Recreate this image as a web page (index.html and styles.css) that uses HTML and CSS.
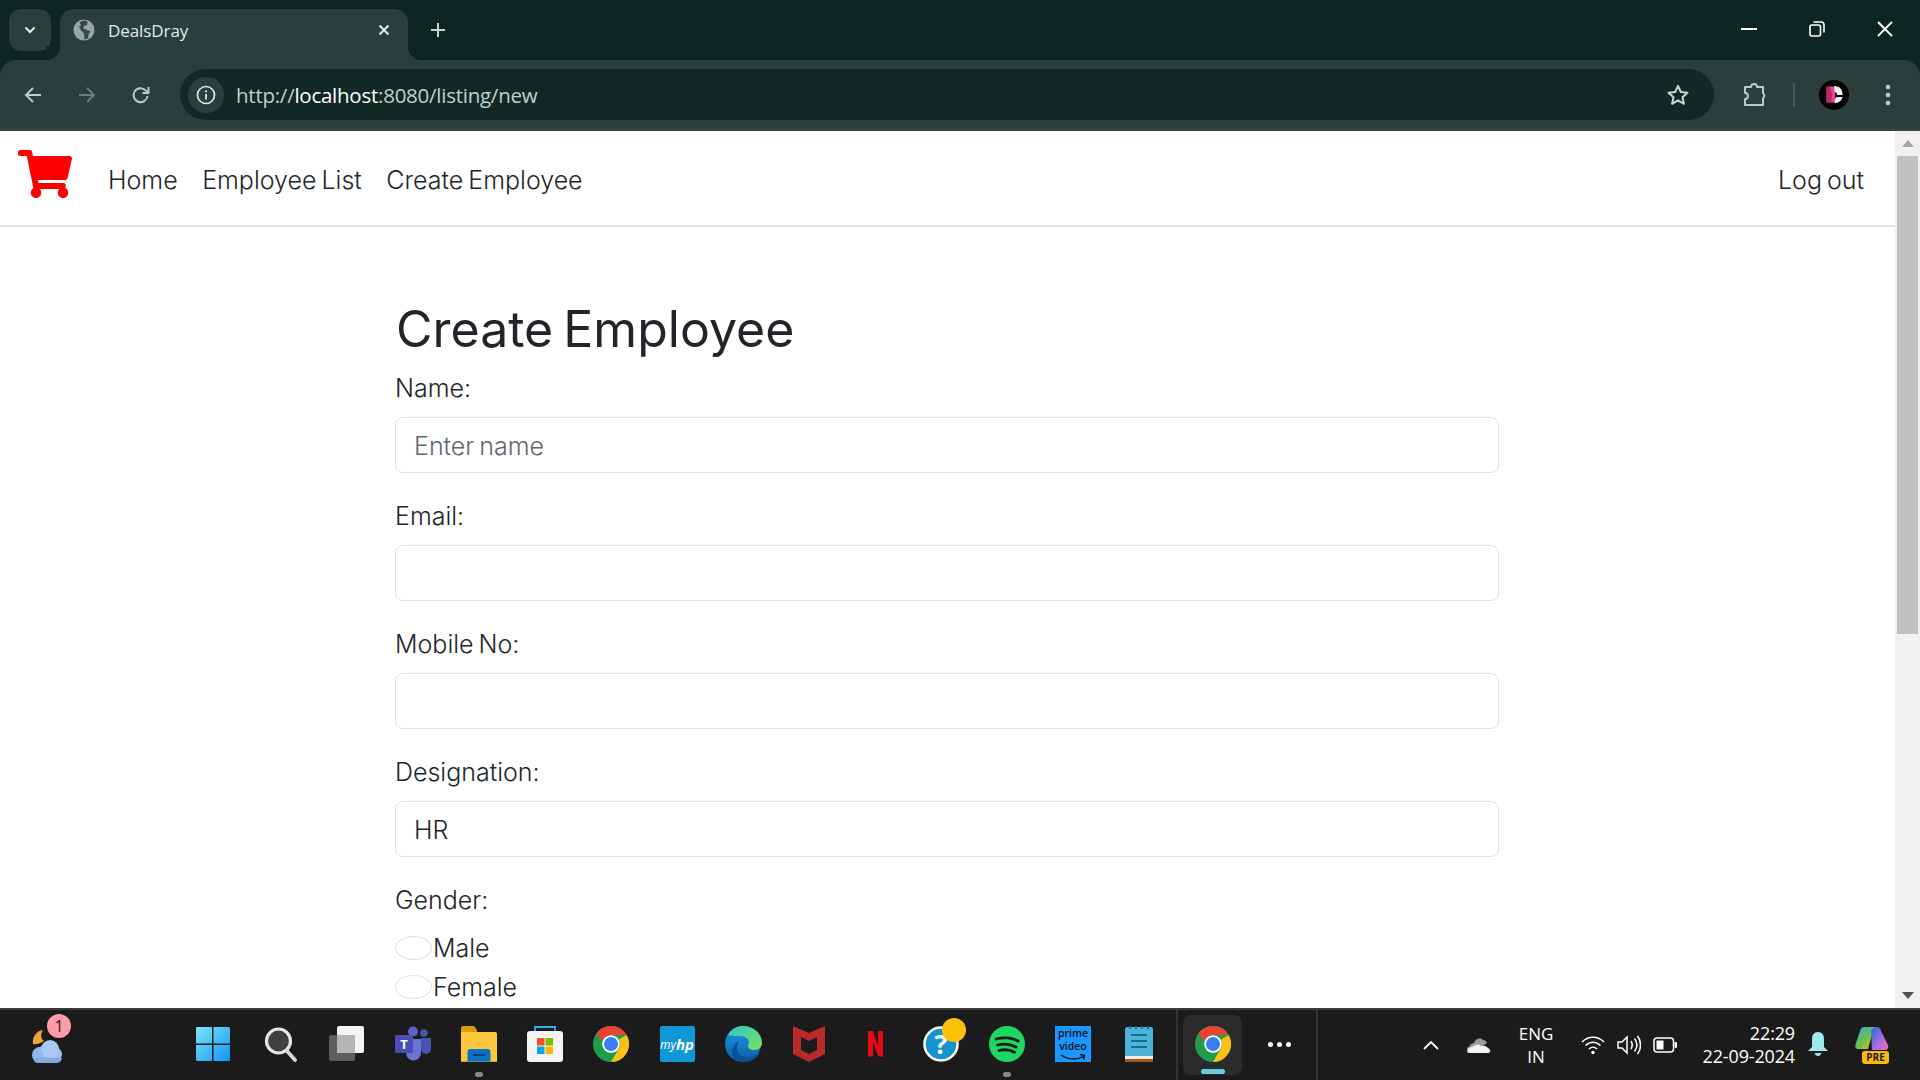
FILE: index.html
```html
<!DOCTYPE html>
<html lang="en">
<head>
<meta charset="utf-8">
<title>DealsDray</title>
<link rel="stylesheet" href="styles.css">
</head>
<body>
<header class="browser">
  <div class="tabstrip">
    <button class="tablist"><svg width="14" height="14" viewBox="0 0 14 14"><path d="M2.500 4.500 7 9l4.500-4.500" class="st-w2"/></svg></button>
    <div class="tab">
      <svg class="globe" width="22" height="22" viewBox="0 0 22 22"><circle cx="11" cy="11" r="10.500" fill="#9aa5a6"/><path d="M11 1.500c-3 .5-6 2.500-7 5l3 2.500 1 3 2 .5 1 3 .5 5c1.500-.2 2.500-.5 3.500-1l.5-4 2-3-3.500-1.500L10 9l1.500-2.500L14 6l.500-3.500c-1-.5-2-1-3.500-1z" fill="#2a3f3c" opacity=".9"/><path d="M6 3 8 6 6 8 3.500 6z" fill="#9aa5a6"/></svg>
      <span class="tab-title">DealsDray</span>
      <svg class="tab-close" width="14" height="14" viewBox="0 0 14 14"><path d="m2.500 2.500 9 9m0-9-9 9" class="st-w2"/></svg>
    </div>
    <svg class="newtab" width="18" height="18" viewBox="0 0 18 18"><path d="M9 2v14M2 9h14" stroke="#c6d3d0" stroke-width="2" fill="none"/></svg>
    <div class="winctl">
      <span class="winbtn"><svg width="16" height="4" viewBox="0 0 16 4"><path d="M0 2h16" stroke="#fff" stroke-width="2"/></svg></span>
      <span class="winbtn"><svg width="16" height="16" viewBox="0 0 16 16" fill="none" stroke="#fff" stroke-width="1.600"><rect x="1" y="4" width="10.500" height="11" rx="2"/><path d="M4.500 1h7.500a3 3 0 0 1 3 3v7.500"/></svg></span>
      <span class="winbtn"><svg width="16" height="16" viewBox="0 0 16 16"><path d="m1 1 14 14m0-14L1 15" stroke="#fff" stroke-width="1.800" fill="none"/></svg></span>
    </div>
  </div>
  <div class="toolbar">
    <span class="navbtn"><svg width="20" height="20" viewBox="0 0 20 20" class="tb-ic"><path d="M18 10H3M10 3l-7 7 7 7"/></svg></span>
    <span class="navbtn dim"><svg width="20" height="20" viewBox="0 0 20 20" class="tb-ic"><path d="M2 10h15M10 3l7 7-7 7"/></svg></span>
    <span class="navbtn"><svg width="20" height="20" viewBox="0 0 20 20" class="tb-ic"><path d="M16.500 11a7 7 0 1 1-1.800-5.600L17 7.500"/><path d="M17.500 2v6h-6" fill="none"/></svg></span>
    <div class="omnibox">
      <span class="siteinfo"><svg width="20" height="20" viewBox="0 0 20 20"><circle cx="10" cy="10" r="8.500" fill="none" stroke="#dfe7e5" stroke-width="1.700"/><path d="M10 9v5.500" stroke="#dfe7e5" stroke-width="1.800"/><circle cx="10" cy="6.300" r="1.100" fill="#dfe7e5"/></svg></span>
      <span class="url"><span class="url-dim">http://</span>localhost<span class="url-dim">:8080/listing/new</span></span>
      <svg class="star" width="24" height="24" viewBox="0 0 24 24"><path d="m12 2.800 2.800 6.200 6.700.7-5 4.500 1.400 6.600-5.900-3.400-5.900 3.400 1.400-6.600-5-4.500 6.700-.7z" fill="none" stroke="#c9d5d2" stroke-width="2" stroke-linejoin="round"/></svg>
    </div>
    <svg class="puzzle" width="26" height="26" viewBox="0 0 26 26"><path d="M3 5h6a3 3 0 0 1 6 0h6v6a3 3 0 0 1 0 5v7H3v-6a3 3 0 0 0 0-6z" fill="none" stroke="#b9cbc7" stroke-width="2" stroke-linejoin="round"/></svg>
    <span class="tb-divider"></span>
    <span class="avatar"><svg width="30" height="30" viewBox="0 0 30 30"><circle cx="15" cy="15" r="15" fill="#000"/><path d="M7.500 6.500h7c2 3 2.500 12 1 16H7.500z" fill="#e8418f"/><path d="M10 7c3 3 4 10 2 15l-4.500.5V7z" fill="#b82a6d"/><path d="M15 6c6 0 9 4 8.500 9H18c0-2-1-3-2.500-3zM15.500 23c4 0 7-2 8-6h-6c-.5 1-1 1.500-1.500 1.500z" fill="#f3f3f3"/></svg></span>
    <svg class="kebab" width="6" height="22" viewBox="0 0 6 22"><circle cx="3" cy="3" r="2.300" fill="#b9cbc7"/><circle cx="3" cy="11" r="2.300" fill="#b9cbc7"/><circle cx="3" cy="19" r="2.300" fill="#b9cbc7"/></svg>
  </div>
</header>

<div class="viewport">
  <main class="page">
    <nav class="navbar">
      <a class="brand"><svg width="54" height="48" viewBox="0 0 576 512"><path fill="#f00" d="M528.120 301.319l47.273-208C578.806 78.301 567.391 64 551.990 64H159.208l-9.166-44.810C147.758 8.021 137.930 0 126.529 0H24C10.745 0 0 10.745 0 24v16c0 13.255 10.745 24 24 24h69.883l70.248 343.435C147.325 417.100 136 435.222 136 456c0 30.928 25.072 56 56 56s56-25.072 56-56c0-15.674-6.447-29.835-16.824-40h209.647C430.447 426.165 424 440.326 424 456c0 30.928 25.072 56 56 56s56-25.072 56-56c0-22.172-12.888-41.332-31.579-50.405l5.517-24.276c3.413-15.018-8.002-29.319-23.403-29.319H218.117l-6.545-32h293.145c11.206 0 20.920-7.754 23.403-18.681z"/></svg></a>
      <ul class="navlinks">
        <li>Home</li>
        <li>Employee List</li>
        <li>Create Employee</li>
      </ul>
      <span class="logout">Log out</span>
    </nav>
    <section class="container">
      <h1 class="title">Create Employee</h1>
      <form>
        <div class="group"><label class="lbl">Name:</label><input class="field" type="text" placeholder="Enter name"></div>
        <div class="group"><label class="lbl">Email:</label><input class="field" type="text"></div>
        <div class="group"><label class="lbl">Mobile No:</label><input class="field" type="text"></div>
        <div class="group"><label class="lbl">Designation:</label><input class="field" type="text" value="HR"></div>
        <div class="group">
          <label class="lbl">Gender:</label>
          <div class="radios">
            <label class="radio"><input type="radio" name="g"><span>Male</span></label>
            <label class="radio"><input type="radio" name="g"><span>Female</span></label>
          </div>
        </div>
      </form>
    </section>
  </main>
  <aside class="scrollbar">
    <span class="sb-btn"><svg width="12" height="7" viewBox="0 0 12 7"><path d="M6 0l6 7H0z" fill="#a3a3a3"/></svg></span>
    <span class="sb-thumb"></span>
    <span class="sb-fill"></span>
    <span class="sb-btn"><svg width="12" height="7" viewBox="0 0 12 7"><path d="M0 0h12L6 7z" fill="#505050"/></svg></span>
  </aside>
</div>

<footer class="taskbar">
  <div class="weather">
    <svg width="38" height="38" viewBox="0 0 38 38"><path d="M15 2a12 12 0 0 0-10 14c3 1 8-1 11-3-4-3-3-8-1-11z" fill="#f2a13a"/><ellipse cx="20" cy="26" rx="14" ry="9" fill="#9cc0f2"/><circle cx="12" cy="27" r="8" fill="#8fb6ee"/><circle cx="22" cy="21" r="9" fill="#a9c9f5"/><path d="M5 30h29c-1 4-3 5-6 5H10c-3 0-4-2-5-5z" fill="#84a9e2"/></svg>
    <span class="wbadge">1</span>
  </div>
  <div class="apps">
    <span class="slot"><svg width="36" height="36" viewBox="0 0 36 36"><defs><linearGradient id="w1" x1="0" y1="0" x2="1" y2="1"><stop offset="0" stop-color="#7ce8fb"/><stop offset="1" stop-color="#0f94f5"/></linearGradient></defs><path d="M1 2a1.500 1.500 0 0 1 1.500-1H17v16.500H1zM18.500 1H33.500A1.500 1.500 0 0 1 35 2.500v15H18.500zM1 19h16v16H2.500A1.500 1.500 0 0 1 1 33.500zM18.500 19H35v14.500a1.500 1.500 0 0 1-1.500 1.500H18.500z" fill="url(#w1)"/></svg></span>
    <span class="slot"><svg width="34" height="36" viewBox="0 0 34 36"><circle cx="14.500" cy="15" r="12" fill="#3f3f3f" stroke="#e6e6e6" stroke-width="3.200"/><path d="m23 25 8 9" stroke="#d8d8d8" stroke-width="3.800" stroke-linecap="round"/></svg></span>
    <span class="slot"><svg width="36" height="36" viewBox="0 0 36 36"><rect x="0" y="9" width="26" height="26" rx="2" fill="#5e5e5e"/><rect x="8" y="0" width="27" height="27" rx="2" fill="#f5f5f5"/><rect x="8" y="9" width="18" height="18" fill="#b5b5b5"/></svg></span>
    <span class="slot"><svg width="36" height="36" viewBox="0 0 36 36"><circle cx="18" cy="5.500" r="5" fill="#5a62c4"/><circle cx="29" cy="7" r="3.800" fill="#4a52b0"/><path d="M11 13h15v14a7.500 7.500 0 0 1-15 0z" fill="#6b72d2"/><path d="M26 12h10v11a5 5 0 0 1-10 0z" fill="#4a52b0"/><rect x="0" y="9" width="18" height="18" rx="1.500" fill="#4a4fb8"/><text x="9" y="23" class="svg-t" fill="#fff" text-anchor="middle" font-size="13">T</text></svg></span>
    <span class="slot dotted"><svg width="36" height="36" viewBox="0 0 36 36"><path d="M0 2a2 2 0 0 1 2-2h11l3 4v32H0z" fill="#d99e00"/><path d="M0 6h34a2 2 0 0 1 2 2v28H0z" fill="#fdc83e"/><path d="M0 35.500h36v.5H0z" fill="#b78400"/><path d="M6.500 35.500V26a3 3 0 0 1 3-3h17a3 3 0 0 1 3 3v9.500z" fill="#0a73c4"/><rect x="12" y="28" width="12" height="1.800" fill="#063f6e"/></svg></span>
    <span class="slot"><svg width="36" height="36" viewBox="0 0 36 36"><path d="M8 5V1h20v4" fill="none" stroke="#2fb3ee" stroke-width="1.800"/><rect x="0" y="5" width="36" height="31" rx="3" fill="#f4f4f4"/><rect x="10" y="12" width="7.500" height="7.500" fill="#f25022"/><rect x="18.500" y="12" width="7.500" height="7.500" fill="#7fba00"/><rect x="10" y="20.500" width="7.500" height="7.500" fill="#00a4ef"/><rect x="18.500" y="20.500" width="7.500" height="7.500" fill="#ffb900"/></svg></span>
    <span class="slot"><svg width="36" height="36" viewBox="0 0 36 36"><use href="#chrome-ic"/></svg></span>
    <span class="slot"><span class="hp">my<b>hp</b></span></span>
    <span class="slot"><svg width="37" height="36" viewBox="0 0 37 36"><defs><linearGradient id="e1" x1="0" y1="0" x2="1" y2="1"><stop offset="0" stop-color="#2cc9c5"/><stop offset="1" stop-color="#7ce05c"/></linearGradient><linearGradient id="e2" x1="0" y1="0" x2="0" y2="1"><stop offset="0" stop-color="#1d9ce0"/><stop offset="1" stop-color="#0c5ea8"/></linearGradient></defs><circle cx="18" cy="18" r="18" fill="url(#e2)"/><path d="M3 9C7 2 13 0 18 0c10 0 19 7 19 17 0 4-3 7-8 7-4 0-6-2-6-4 0-1 1-2 1-4 0-3-4-6-9-6-5 0-9 0-12-1z" fill="url(#e1)"/><path d="M21 14c-6-1-9 3-9 8 0 5 4 9 9 9 5 0 10-1 14-4-3 5-9 9-16 9-3 0-6-1-9-3C5 29 6 14 21 14z" fill="#0b4f94"/></svg></span>
    <span class="slot"><svg width="32" height="36" viewBox="0 0 32 36"><path d="M0 0l16 7 16-7v28l-16 8-16-8z" fill="#b92b2b"/><path d="M8 11l8 4 8-4v13l-8 4-8-4z" fill="#1b1b1b"/></svg></span>
    <span class="slot"><svg width="15" height="26" viewBox="0 0 15 26"><path d="M0 0h5l5 15V0h5v26l-5-1-5-14v14l-5 1z" fill="#e50914"/></svg></span>
    <span class="slot"><span class="helpwrap"><svg width="36" height="36" viewBox="0 0 36 36"><circle cx="18" cy="18" r="16.500" fill="#1593d1" stroke="#fff" stroke-width="2.500"/><text x="18" y="28" class="svg-t" fill="#fff" text-anchor="middle" font-size="27" font-weight="700">?</text></svg><span class="ydot"></span></span></span>
    <span class="slot dotted"><svg width="36" height="36" viewBox="0 0 36 36"><circle cx="18" cy="18" r="18" fill="#1ed760"/><path d="M7 13c7-2 16-1.500 22 2M8.500 19c6-1.500 13-1 18.500 2M10 24.500c5-1.200 11-.8 15.500 1.800" fill="none" stroke="#1b1b1b" stroke-width="2.800" stroke-linecap="round"/></svg></span>
    <span class="slot"><span class="prime"><span class="prime-t">prime</span><span class="prime-t">video</span><svg width="26" height="7" viewBox="0 0 26 7"><path d="M1 1c7 5 17 5 23 1M20 .5l4.500 1-1 4" fill="none" stroke="#111" stroke-width="1.500"/></svg></span></span>
    <span class="slot"><svg width="28" height="36" viewBox="0 0 28 36"><rect y="1" width="28" height="35" rx="2" fill="#4db2d6"/><rect y="30" width="28" height="3" fill="#eee"/><path d="M0 33h28v1a2 2 0 0 1-2 2H2a2 2 0 0 1-2-2z" fill="#a8560f"/><path d="M6 9h16M6 15h16M6 21h16" stroke="#0f6f94" stroke-width="2"/><path d="M5 0v3M11 0v3M17 0v3M23 0v3" stroke="#0f6f94" stroke-width="2"/></svg></span>
  </div>
  <span class="tb-sep"></span>
  <span class="active-app"><svg width="36" height="36" viewBox="0 0 36 36"><g id="chrome-ic"><circle cx="18" cy="18" r="18" fill="#1f9d4d"/><path d="M18 0a18 18 0 0 1 15.600 9H18a9 9 0 0 0-8.500 6L3.200 7.700A18 18 0 0 1 18 0z" fill="#ea4335"/><path d="M33.600 9A18 18 0 0 1 18 36l7.800-13.500A9 9 0 0 0 26 13.500z" fill="#fbc116"/><circle cx="18" cy="18" r="8.800" fill="#fff"/><circle cx="18" cy="18" r="7" fill="#3b7ef0"/></g></svg><span class="active-line"></span></span>
  <span class="more"><i></i><i></i><i></i></span>
  <span class="tb-sep sep2"></span>
  <div class="tray">
    <svg class="tr-chev" width="16" height="10" viewBox="0 0 16 10"><path d="m1 9 7-7 7 7" fill="none" stroke="#fff" stroke-width="1.800"/></svg>
    <svg class="tr-cloud" width="24" height="16" viewBox="0 0 24 16"><path d="M3 16a3 3 0 0 1-1-6c1-3 3-4 5-4 1-4 6-6 9-3 2 0 3 1 4 3l-9 6z" fill="#9a9a9a"/><path d="M3 16c-2 0-3-3-1-5l7-3c3-1 4 0 5 1 4-1 6 1 7 2 3 1 3 5 0 5z" fill="#f2f2f2"/></svg>
    <span class="lang">ENG<br>IN</span>
    <svg class="tr-wifi" width="24" height="20" viewBox="0 0 24 20" fill="none" stroke="#fff" stroke-width="1.500"><path d="M1 7c6-6.500 16-6.500 22 0M4.500 10.500c4.500-4.500 10.500-4.500 15 0M8 14c2.500-2.500 5.500-2.500 8 0"/><circle cx="12" cy="17.500" r="1.700" fill="#fff" stroke="none"/></svg>
    <svg class="tr-vol" width="24" height="22" viewBox="0 0 24 22" fill="none" stroke="#fff" stroke-width="1.500"><path d="M1 8v6h4l5 5V3L5 8zM14 7c1.500 2.500 1.500 5.500 0 8M17.500 4.500c3 4 3 9 0 13M20.500 2c4 5 4 13 0 18"/></svg>
    <svg class="tr-bat" width="24" height="16" viewBox="0 0 24 16"><rect x="1" y="1" width="19.500" height="14" rx="3" fill="none" stroke="#fff" stroke-width="1.500"/><rect x="3.500" y="3.500" width="7" height="9" fill="#fff"/><rect x="21.500" y="5" width="2.500" height="6" rx="1" fill="#fff"/></svg>
    <span class="clock"><span>22:29</span><span>22-09-2024</span></span>
    <svg class="tr-bell" width="20" height="26" viewBox="0 0 20 26"><path d="M10 0c4 0 6 3 6 7v8l4 4H0l4-4V7c0-4 2-7 6-7z" fill="#9deaea"/><path d="M6.500 21h7c-.5 2-2 3-3.500 3s-3-1-3.500-3z" fill="#9deaea"/></svg>
    <span class="copilot"><svg width="34" height="28" viewBox="0 0 34 28"><defs><linearGradient id="c1" x1="0" y1="0" x2="1" y2="1"><stop offset="0" stop-color="#35a9e8"/><stop offset=".5" stop-color="#6cc04a"/><stop offset="1" stop-color="#f5c518"/></linearGradient><linearGradient id="c2" x1="0" y1="0" x2="1" y2="1"><stop offset="0" stop-color="#1f6fe0"/><stop offset=".6" stop-color="#b06ae0"/><stop offset="1" stop-color="#f06ab0"/></linearGradient></defs><path d="M9 0h14c-2 0-4 1-5 4l-5 18H3c-3 0-3-3-2-6L5 4c.5-2 2-4 4-4z" fill="url(#c1)"/><path d="M16 4c1-3 3-4 6-4 2 0 3 1 4 4l7 14c1 3-1 5-3 5H17z" fill="url(#c2)"/></svg><span class="pre">PRE</span></span>
  </div>
</footer>
</body>
</html>
```
FILE: styles.css
```css
* { box-sizing: border-box; }
html, body { margin: 0; height: 100%; overflow: hidden; }
body { display: flex; flex-direction: column; height: 1080px; font-family: "Open Sans", sans-serif; background: #fff; }

.st-w2 { fill: none; stroke: #e4ecea; stroke-width: 2; }

/* Browser chrome */
.browser { background: #0d2523; flex: none; }
.tabstrip { height: 60px; display: flex; align-items: flex-start; padding: 9px 0 0 9px; }
.tablist { width: 42px; height: 42px; border: 0; border-radius: 12px; background: #2a3f3c; display: flex; align-items: center; justify-content: center; padding: 0; }
.tab { position: relative; width: 348px; height: 51px; margin-left: 9px; background: #2a3f3c; border-radius: 14px 14px 0 0; display: flex; align-items: center; padding: 0 17px 10px 13px; color: #e3e9e8; }
.tab::before, .tab::after { content: ""; position: absolute; bottom: 0; width: 14px; height: 14px; }
.tab::before { left: -14px; background: radial-gradient(circle at 0 0, #0d2523 14px, #2a3f3c 14.500px); }
.tab::after { right: -14px; background: radial-gradient(circle at 100% 0, #0d2523 14px, #2a3f3c 14.500px); }
.tab-title { margin-left: 13px; flex: 1; font-size: 17px; letter-spacing: -.08px; position: relative; top: 1px; }
.newtab { margin: 12px 0 0 21px; }
.winctl { margin-left: auto; display: flex; width: 205px; padding-right: 1px; }
.winbtn { flex: 1; height: 40px; display: flex; align-items: center; justify-content: center; margin-top: 0; }
.toolbar { height: 71px; background: #2a3f3c; border-radius: 16px 16px 0 0; border-bottom: 2px solid #3c4442; display: flex; align-items: center; padding: 0 29px 0 6px; }
.navbtn { width: 54px; height: 40px; display: flex; align-items: center; justify-content: center; }
.navbtn.dim { opacity: .45; }
.tb-ic { fill: none; stroke: #b9cbc7; stroke-width: 2; }
.omnibox { flex: 1; height: 51px; margin-left: 12px; background: #122825; border-radius: 26px; display: flex; align-items: center; padding: 0 24px 0 8px; }
.siteinfo { width: 36px; height: 36px; border-radius: 50%; background: #2a3f3c; display: flex; align-items: center; justify-content: center; }
.url { margin-left: 12px; flex: 1; font-size: 20.500px; color: #fff; letter-spacing: -.25px; }
.url-dim { color: #c3d0cd; }
.puzzle { margin-left: 28px; }
.tb-divider { width: 2px; height: 24px; background: #455a56; margin-left: 25px; }
.avatar { width: 30px; height: 30px; margin-left: 24px; display: flex; }
.kebab { margin-left: 36px; }

/* Page viewport */
.viewport { flex: 1; min-height: 0; display: flex; }
.page { flex: 1; min-width: 0; overflow: hidden; color: #212529; font-family: Inter, sans-serif; font-weight: 300; }
.navbar { height: 96px; border-bottom: 2px solid #e3e3ec; display: flex; align-items: center; padding: 0 31px 0 18px; font-size: 25px; word-spacing: -2px; }
.brand { display: flex; margin-top: -8px; }
.navlinks { list-style: none; margin: 0 0 0 36px; padding: 4px 0 0; display: flex; gap: 24.500px; }
.logout { margin-left: auto; padding-top: 4px; }
.container { width: 1104px; margin: 0 0 0 395px; padding-top: 72px; }
.title { margin: 0 0 11px; padding-left: 1px; font-size: 50px; line-height: 60px; font-weight: 400; word-spacing: -4px; }
.group { margin-bottom: 25px; }
.lbl { display: block; font-size: 25px; line-height: 37px; margin-bottom: 10px; word-spacing: -2px; }
.field { display: block; width: 100%; height: 56px; border: 1px solid #dee2e6; border-radius: 8px; padding: 2px 18px 0; font: 300 25px Inter, sans-serif; word-spacing: -2px; color: #212529; outline: 0; }
.field::placeholder { color: #5f666d; opacity: 1; }
.radios { display: flex; flex-direction: column; gap: 2px; }
.radio { display: flex; align-items: center; height: 37px; font-size: 25px; }
.radio input { appearance: none; width: 37px; height: 24px; border: 1px solid #dee2e6; border-radius: 50%; margin: 0 1px 0 0; background: #fff; }

/* Scrollbar */
.scrollbar { width: 25px; flex: none; background: #f1f1f1; display: flex; flex-direction: column; align-items: center; }
.sb-btn { height: 25px; flex: none; display: flex; align-items: center; justify-content: center; }
.sb-thumb { width: 21px; height: 478px; background: #c1c1c1; flex: none; }
.sb-fill { flex: 1; }

/* Taskbar */
.taskbar { height: 72px; flex: none; background: #1b1b1b; border-top: 2px solid #3a3a3a; display: flex; align-items: center; color: #fff; position: relative; }
.weather { position: relative; width: 180px; padding: 0 0 0 28px; display: flex; margin-top: 4px; }
.wbadge { position: absolute; left: 47px; top: -14px; width: 24px; height: 24px; border-radius: 50%; background: #ff9aa8; color: #1b1b1b; font-size: 16px; line-height: 24px; text-align: center; }
.apps { display: flex; margin-top: -2px; }
.slot { position: relative; width: 66px; height: 60px; display: flex; align-items: center; justify-content: center; }
.slot:first-child { margin-right: 2px; }
.slot.dotted::after { content: ""; position: absolute; bottom: -3px; left: 29px; width: 8px; height: 5px; border-radius: 3px; background: #8a8a8a; }
.svg-t { font-family: "Open Sans", sans-serif; font-weight: 700; }
.hp { width: 35px; height: 36px; background: #0f97d8; border-radius: 2px; font-size: 12px; color: #fff; display: flex; align-items: center; justify-content: center; font-style: italic; }
.hp b { font-size: 15px; }
.prime { width: 36px; height: 36px; background: #1a98ff; color: #111; font-size: 10.500px; text-align: center; font-weight: 600; display: flex; flex-direction: column; align-items: center; padding-top: 1px; }
.prime-t { display: block; height: 13px; line-height: 13px; }
.prime svg { display: block; margin-top: 1px; }
.helpwrap { position: relative; display: flex; }
.ydot { position: absolute; left: 19px; top: -8px; width: 24px; height: 24px; border-radius: 50%; background: #ffc107; }
.tb-sep { width: 2px; height: 70px; background: #333; margin-left: 4px; flex: none; }
.active-app { position: relative; width: 59px; height: 60px; margin-left: 5px; background: #2b2b2b; border-radius: 8px; display: flex; align-items: center; justify-content: center; flex: none; padding-bottom: 2px; }
.active-line { position: absolute; bottom: 1px; left: 18px; width: 24px; height: 5px; border-radius: 3px; background: #67cfdc; }
.more { width: 74px; display: flex; justify-content: center; gap: 4px; flex: none; margin-top: -2px; }
.more i { width: 5px; height: 5px; border-radius: 50%; background: #fff; }
.sep2 { margin-left: 0; }
.tray { flex: 1; display: flex; align-items: center; position: relative; height: 100%; padding-left: 105px; }
.tr-cloud { margin-left: 28px; }
.lang { width: 36px; margin-left: 27px; text-align: center; font-size: 17px; line-height: 23px; }
.tr-wifi { margin-left: 27px; }
.tr-vol { margin-left: 12px; }
.tr-bat { margin-left: 12px; }
.clock { margin-left: 26px; width: 92px; display: flex; flex-direction: column; align-items: flex-end; font-size: 18px; line-height: 23px; white-space: nowrap; letter-spacing: -.15px; }
.tr-bell { margin-left: 13px; }
.copilot { position: relative; margin-left: 27px; display: flex; margin-top: -8px; }
.pre { position: absolute; right: 0; bottom: -9px; width: 27px; height: 13px; border-radius: 3px; background: #fbb914; color: #1b1b1b; font-size: 10px; line-height: 13px; font-weight: 700; text-align: center; }
```
